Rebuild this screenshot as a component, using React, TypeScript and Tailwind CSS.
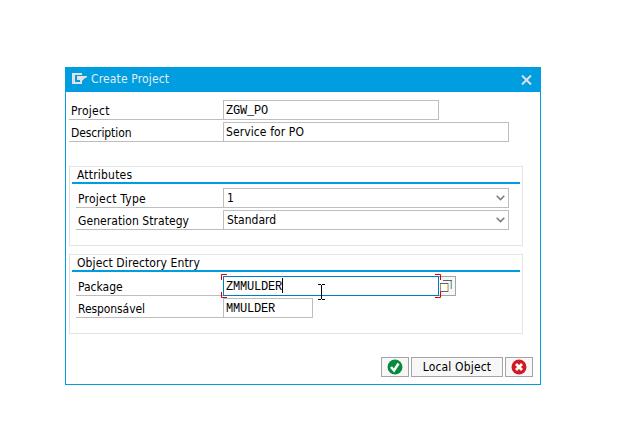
import type { ReactNode } from 'react';

const sans = "font-['DejaVu_Sans_Condensed','DejaVu_Sans',sans-serif] [font-stretch:condensed]";
const mono = "font-['Liberation_Mono',monospace] tracking-[-0.2px] -ml-px mt-[2px]";

function Row({ label, labelClass, indent, children }: { label: string; labelClass: string; indent?: boolean; children: ReactNode }) {
  return (
    <div className="flex h-5">
      <div className={`${indent ? 'w-[147px]' : 'w-[154px]'} h-5 shrink-0 border-b border-[#bdbdbd] pl-[2px] leading-[21px] ${labelClass}`}>{label}</div>
      {children}
    </div>
  );
}

function Field({ width, children }: { width: string; children: ReactNode }) {
  return <div className={`${width} flex h-5 shrink-0 items-center justify-between border border-[#bdbdbd] pl-[3px] leading-[18px]`}>{children}</div>;
}

function Chevron() {
  return (
    <svg width="9" height="6" viewBox="0 0 9 6" className="mr-[3px]" fill="none" stroke="#7b7b7b" strokeWidth="1.5">
      <path d="M.7 .8 4.5 4.6 8.3 .8" />
    </svg>
  );
}

function Group({ title, titleClass, children }: { title: string; titleClass: string; children: ReactNode }) {
  return (
    <section className="h-20 w-[454px] border border-[#e3e3e3] px-[2px]">
      <div className={`h-[17px] border-b-2 border-[#009de0] pl-[5px] leading-[16px] ${titleClass}`}>{title}</div>
      <div className="flex flex-col gap-[2px] pt-1 pl-1">{children}</div>
    </section>
  );
}

function Button({ width, children }: { width: string; children: ReactNode }) {
  return <button className={`${width} flex h-5 items-center justify-center border border-[#a4a4a4] bg-[#f7f7f7]`}>{children}</button>;
}

export default function App() {
  return (
    <main className={`relative h-[428px] w-[627px] overflow-hidden bg-white pt-[67px] pl-[65px] text-[12px] whitespace-nowrap text-black ${sans}`}>
      <div className="flex h-[318px] w-[476px] flex-col border border-[#009de0]">
        <header className="flex h-6 shrink-0 items-center bg-[#009de0] text-[#e2eef4]">
          <svg width="15" height="11" viewBox="0 0 15 11" className="-mt-[3px] ml-[6px]">
            <path d="M0 0h10v2H3v7h5V8h2v3H0z" fill="#e2e2e2" />
            <path d="M5 3h10v1l-1 1h-1l-3 3H8V7H5z" fill="#e2e2e2" />
          </svg>
          <span className="-mt-[2px] ml-1 leading-[22px] tracking-[0.14px]">Create Project</span>
          <svg width="11" height="10" viewBox="0 0 11 10" className="mr-2 ml-auto" stroke="#e2e2e2" strokeWidth="2">
            <path d="m1 .5 9 9M10 .5l-9 9" />
          </svg>
        </header>
        <div className="flex flex-col gap-[2px] pt-2 pl-[3px]">
          <Row label="Project" labelClass="tracking-[0.25px] pt-px">
            <Field width="w-[216px]"><span className={mono}>ZGW_PO</span></Field>
          </Row>
          <Row label="Description" labelClass="tracking-[-0.1px] pt-px">
            <Field width="w-[286px]"><span className="-ml-px tracking-[0.1px]">Service for PO</span></Field>
          </Row>
        </div>
        <div className="flex flex-col gap-2 pt-6 pl-[3px]">
          <Group title="Attributes" titleClass="tracking-[0.2px]">
            <Row indent label="Project Type" labelClass="tracking-[0.25px] pt-px">
              <Field width="w-[286px]"><span>1</span><Chevron /></Field>
            </Row>
            <Row indent label="Generation Strategy" labelClass="tracking-[0.06px] pt-px">
              <Field width="w-[286px]"><span>Standard</span><Chevron /></Field>
            </Row>
          </Group>
          <Group title="Object Directory Entry" titleClass="tracking-[0.11px]">
            <Row indent label="Package" labelClass="pt-px">
              <div className="relative flex h-5 w-[216px] shrink-0 items-center border border-[#007cc0] pl-[3px] leading-[18px]">
                <span className={mono}>ZMMULDER</span>
                <i className="absolute top-px left-[58px] h-[15px] w-px bg-black" />
                <svg width="220" height="24" viewBox="0 0 220 24" className="absolute -top-[3px] -left-[3px] max-w-none" fill="none" stroke="#dc0000">
                  <path d="M6 .5H.5V6M214 .5h5.500V6M.5 18v5.500H6M219.500 18v5.500H214" />
                </svg>
              </div>
              <div className="h-5 w-[17px] border border-l-0 border-[#a4a4a4] bg-[#f7f7f7]">
                <svg width="16" height="18" viewBox="0 0 16 18" fill="none">
                  <path d="M4 3.500h9" stroke="#626262" />
                  <path d="M12.500 4v8" stroke="#72a8d8" />
                  <path d="M11.500 4v8" stroke="#f6d18c" />
                  <path d="M1 6.500h9M1 14.500h9" stroke="#626262" />
                  <path d="M2 7h7v7H2z" fill="#fff" />
                  <path d="M1.500 7v7" stroke="#b78573" />
                  <path d="M8.500 7v7" stroke="#f6c877" />
                  <path d="M9.500 6v9" stroke="#9fc4dd" />
                </svg>
              </div>
            </Row>
            <Row indent label="Responsável" labelClass="tracking-[-0.08px] pt-px">
              <Field width="w-[90px]"><span className={mono}>MMULDER</span></Field>
            </Row>
          </Group>
        </div>
        <footer className="mt-auto mb-[7px] flex justify-end gap-[2px] pr-[7px]">
          <Button width="w-7">
            <svg width="16" height="16" viewBox="0 0 16 16" className="mr-px">
              <circle cx="8" cy="8" r="7.500" fill="#078c3c" />
              <path d="m4 8 3 3.500 4.500-7" fill="none" stroke="#fff" strokeWidth="2.500" />
            </svg>
          </Button>
          <Button width="w-[92px]"><span className="tracking-[0.15px]">Local Object</span></Button>
          <Button width="w-7">
            <svg width="16" height="16" viewBox="0 0 16 16" className="mr-px">
              <circle cx="8" cy="8" r="7.500" fill="#d01920" />
              <path d="m5 5 6 6M11 5l-6 6" stroke="#fff" strokeWidth="2.800" />
            </svg>
          </Button>
        </footer>
      </div>
      <svg width="7" height="17" viewBox="0 0 7 17" className="absolute top-[284px] left-[318px]" fill="none" stroke="#000">
        <path d="M0 .5h3M4 .5h3M3.500 1v14M0 15.500h3M4 15.500h3" />
      </svg>
    </main>
  );
}
